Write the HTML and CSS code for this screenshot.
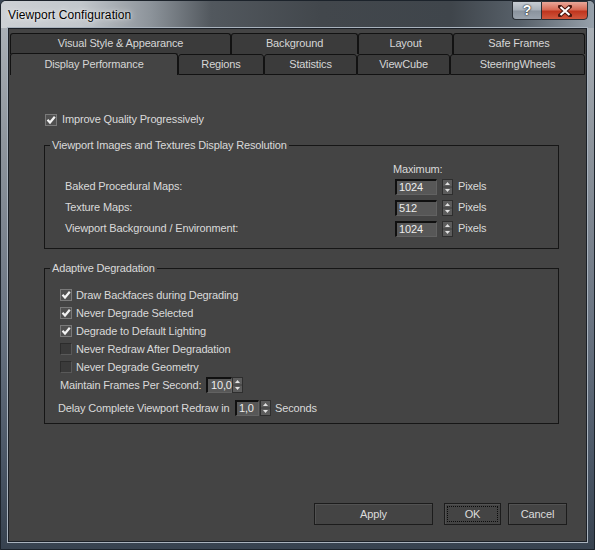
FILE: index.html
```html
<!DOCTYPE html>
<html>
<head>
<meta charset="utf-8">
<link rel="stylesheet" href="styles.css">
</head>
<body>
<div class="window">
  <div class="titlebar">
    <span class="title">Viewport Configuration</span>
    <div class="caption-buttons">
      <div class="cap help">?</div>
      <div class="cap close">
        <svg width="14" height="12" viewBox="0 0 14 12"><path d="M2 1.5 L12 10.5 M12 1.5 L2 10.5" stroke="#4a1810" stroke-width="4" stroke-linecap="square" fill="none"/><path d="M2.5 2 L11.5 10 M11.5 2 L2.5 10" stroke="#ffffff" stroke-width="2" fill="none"/></svg>
      </div>
    </div>
  </div>
  <div class="client">
    <div class="tabs">
      <div class="tabrow row1">
        <div class="tab t-visual">Visual Style &amp; Appearance</div>
        <div class="tab t-background">Background</div>
        <div class="tab t-layout">Layout</div>
        <div class="tab t-safe">Safe Frames</div>
      </div>
      <div class="tabrow row2">
        <div class="tab selected t-display">Display Performance</div>
        <div class="tab t-regions">Regions</div>
        <div class="tab t-stats">Statistics</div>
        <div class="tab t-cube">ViewCube</div>
        <div class="tab t-wheels">SteeringWheels</div>
      </div>
    </div>
    <div class="panel">
      <div class="check improve">
        <span class="box checked"><svg width="12" height="12" viewBox="0 0 12 12"><path d="M2.5 5.8 L5 8.5 L9.8 2.8" stroke="#f2f2f2" stroke-width="2.2" fill="none"/></svg></span>
        <span>Improve Quality Progressively</span>
      </div>

      <fieldset class="group g1">
        <legend>Viewport Images and Textures Display Resolution</legend>
        <div class="g1-body">
          <div class="max-label">Maximum:</div>
          <div class="res-row">
            <span class="res-label">Baked Procedural Maps:</span>
            <span class="field wide">1024</span>
            <span class="spin"><svg width="11" height="16" viewBox="0 0 11 16"><rect x="0.5" y="0.5" width="10" height="15" fill="#5c5c5c" stroke="#2e2e2e"/><line x1="1" y1="8" x2="10" y2="8" stroke="#3c3c3c"/><path d="M5.5 3 L8 6 L3 6 Z" fill="#e2e2e2"/><path d="M3 10 L8 10 L5.5 13 Z" fill="#e2e2e2"/></svg></span>
            <span class="unit">Pixels</span>
          </div>
          <div class="res-row">
            <span class="res-label">Texture Maps:</span>
            <span class="field wide">512</span>
            <span class="spin"><svg width="11" height="16" viewBox="0 0 11 16"><rect x="0.5" y="0.5" width="10" height="15" fill="#5c5c5c" stroke="#2e2e2e"/><line x1="1" y1="8" x2="10" y2="8" stroke="#3c3c3c"/><path d="M5.5 3 L8 6 L3 6 Z" fill="#e2e2e2"/><path d="M3 10 L8 10 L5.5 13 Z" fill="#e2e2e2"/></svg></span>
            <span class="unit">Pixels</span>
          </div>
          <div class="res-row">
            <span class="res-label">Viewport Background / Environment:</span>
            <span class="field wide">1024</span>
            <span class="spin"><svg width="11" height="16" viewBox="0 0 11 16"><rect x="0.5" y="0.5" width="10" height="15" fill="#5c5c5c" stroke="#2e2e2e"/><line x1="1" y1="8" x2="10" y2="8" stroke="#3c3c3c"/><path d="M5.5 3 L8 6 L3 6 Z" fill="#e2e2e2"/><path d="M3 10 L8 10 L5.5 13 Z" fill="#e2e2e2"/></svg></span>
            <span class="unit">Pixels</span>
          </div>
        </div>
      </fieldset>

      <fieldset class="group g2">
        <legend>Adaptive Degradation</legend>
        <div class="g2-body">
          <div class="check row">
            <span class="box checked"><svg width="12" height="12" viewBox="0 0 12 12"><path d="M2.5 5.8 L5 8.5 L9.8 2.8" stroke="#f2f2f2" stroke-width="2.2" fill="none"/></svg></span>
            <span>Draw Backfaces during Degrading</span>
          </div>
          <div class="check row">
            <span class="box checked"><svg width="12" height="12" viewBox="0 0 12 12"><path d="M2.5 5.8 L5 8.5 L9.8 2.8" stroke="#f2f2f2" stroke-width="2.2" fill="none"/></svg></span>
            <span>Never Degrade Selected</span>
          </div>
          <div class="check row">
            <span class="box checked"><svg width="12" height="12" viewBox="0 0 12 12"><path d="M2.5 5.8 L5 8.5 L9.8 2.8" stroke="#f2f2f2" stroke-width="2.2" fill="none"/></svg></span>
            <span>Degrade to Default Lighting</span>
          </div>
          <div class="check row">
            <span class="box"></span>
            <span>Never Redraw After Degradation</span>
          </div>
          <div class="check row">
            <span class="box"></span>
            <span>Never Degrade Geometry</span>
          </div>
          <div class="spin-row fps">
            <span class="fps-label">Maintain Frames Per Second:</span>
            <span class="field fps-field">10,0</span>
            <span class="spin tight"><svg width="11" height="16" viewBox="0 0 11 16"><rect x="0.5" y="0.5" width="10" height="15" fill="#5c5c5c" stroke="#2e2e2e"/><line x1="1" y1="8" x2="10" y2="8" stroke="#3c3c3c"/><path d="M5.5 3 L8 6 L3 6 Z" fill="#e2e2e2"/><path d="M3 10 L8 10 L5.5 13 Z" fill="#e2e2e2"/></svg></span>
          </div>
          <div class="spin-row delay">
            <span class="delay-label">Delay Complete Viewport Redraw in</span>
            <span class="field delay-field">1,0</span>
            <span class="spin near"><svg width="11" height="16" viewBox="0 0 11 16"><rect x="0.5" y="0.5" width="10" height="15" fill="#5c5c5c" stroke="#2e2e2e"/><line x1="1" y1="8" x2="10" y2="8" stroke="#3c3c3c"/><path d="M5.5 3 L8 6 L3 6 Z" fill="#e2e2e2"/><path d="M3 10 L8 10 L5.5 13 Z" fill="#e2e2e2"/></svg></span>
            <span class="unit seconds">Seconds</span>
          </div>
        </div>
      </fieldset>

      <div class="buttons">
        <div class="btn apply">Apply</div>
        <div class="btn ok"><span class="focus">OK</span></div>
        <div class="btn cancel">Cancel</div>
      </div>
    </div>
  </div>
</div>
</body>
</html>
```

FILE: styles.css
```css
* { box-sizing: border-box; }

html, body {
  margin: 0;
  padding: 0;
  background: #3a4654;
}

body {
  font-family: "Liberation Sans", Arial, sans-serif;
  font-size: 11px;
  line-height: 13px;
  letter-spacing: -0.15px;
  color: #dadada;
  white-space: nowrap;
}

.window {
  width: 595px;
  height: 550px;
  border: 1px solid #1c232b;
  border-radius: 6px 6px 0 0;
  display: flex;
  flex-direction: column;
  background: linear-gradient(to bottom, #b0b6bc 0px, #8e959d 140px, #6a7482 320px, #4a5666 460px, #37424f 550px);
  overflow: hidden;
}

.titlebar {
  height: 27px;
  flex: none;
  display: flex;
  justify-content: space-between;
  align-items: flex-start;
  padding: 0 6px 0 7px;
  background: linear-gradient(to right, #cdd1d5 0px, #c2c7cc 80px, #8c939a 150px, #52585e 210px, #42474c 320px, #3f454b 450px, #58616a 520px, #98a2ac 594px);
}

.title {
  font-family: "Liberation Sans", Arial, sans-serif;
  font-size: 12px;
  line-height: 14px;
  letter-spacing: 0.1px;
  color: #000;
  margin-top: 7px;
  text-shadow: 0 0 6px rgba(255,255,255,0.9), 0 0 2px rgba(255,255,255,0.8);
}

.caption-buttons {
  display: flex;
}

.cap {
  height: 19px;
  border: 1px solid #2b3036;
  display: flex;
  align-items: center;
  justify-content: center;
}

.help {
  width: 29px;
  border-right: none;
  border-radius: 0 0 0 4px;
  background: linear-gradient(to bottom, #c8ced4 0%, #a7afb8 48%, #8a939d 52%, #9aa3ad 100%);
  color: #fff;
  font-weight: bold;
  font-size: 14px;
  text-shadow: 0 0 2px #1a1f24, 0 0 1px #1a1f24;
}

.close {
  width: 47px;
  border-radius: 0 0 4px 0;
  background: linear-gradient(to bottom, #e9a89a 0%, #d76a55 45%, #c0351e 55%, #d0583e 100%);
}

.client {
  flex: 1;
  margin: 0 7px 7px 7px;
  background: #444444;
  border: 1px solid #1b2027;
  box-shadow: 0 0 0 1px #a9b3be;
  display: flex;
  flex-direction: column;
}

/* Tabs */
.tabs {
  padding: 4px 0 0 1px;
  flex: none;
}

.tabrow {
  display: flex;
}

.row1 {
  height: 21px;
}

.row2 {
  height: 22px;
  margin-top: -1px;
  align-items: flex-end;
}

.tab {
  height: 21px;
  background: #3b3b3b;
  border: 1px solid #121212;
  border-radius: 3px 3px 0 0;
  color: #d6d6d6;
  text-align: center;
}

.row1 .tab {
  border-bottom: none;
  line-height: 18px;
}

.row2 .tab {
  line-height: 19px;
}

.row2 .tab.selected {
  height: 22px;
  background: #444444;
  border-bottom: none;
  line-height: 20px;
}

.t-visual { width: 221px; }
.t-background { width: 127px; }
.t-layout { width: 95px; }
.t-safe { width: 132px; }
.t-display { width: 168px; }
.t-regions { width: 86px; }
.t-stats { width: 93px; }
.t-cube { width: 93px; }
.t-wheels { width: 135px; }

/* Panel */
.panel {
  flex: 1;
  display: flex;
  flex-direction: column;
  padding: 0 19px 16px 35px;
}

.check {
  display: flex;
  align-items: center;
}

.box {
  width: 12px;
  height: 12px;
  flex: none;
  background: #3a3a3a;
  border: 1px solid #595959;
  border-top-color: #2c2c2c;
  border-left-color: #2c2c2c;
  display: flex;
  align-items: center;
  justify-content: center;
}

.box svg {
  display: block;
  margin: -1px;
}

.box.checked {
  background: #505050;
  border: 1px solid #7a7a7a;
}

.improve {
  height: 13px;
  margin-top: 38px;
  padding-left: 1px;
}

.improve .box {
  margin-right: 5px;
}

.group {
  margin: 13px 0 0 0;
  padding: 0;
  width: 515px;
  border: 1px solid #161616;
  min-inline-size: 0;
}

.group legend {
  margin-left: 5px;
  padding: 0 2px;
  line-height: 13px;
  color: #dadada;
}

.g1-body {
  padding: 11px 0 9px 20px;
}

.max-label {
  height: 13px;
  padding-left: 328px;
}

.res-row {
  height: 21px;
  display: flex;
  align-items: center;
}

.res-label {
  width: 330px;
  flex: none;
}

.field {
  height: 16px;
  background: #575757;
  border-top: 2px solid #101010;
  border-left: 2px solid #101010;
  border-right: 1px solid #626262;
  border-bottom: 1px solid #626262;
  color: #ececec;
  line-height: 13px;
  padding-left: 2px;
  flex: none;
}

.field.wide { width: 42px; }

.spin {
  display: flex;
  flex: none;
  margin-left: 5px;
}

.spin svg { display: block; }

.spin.tight { margin-left: 0; }
.spin.near { margin-left: 1px; }

.unit {
  margin-left: 5px;
}

.g2-body {
  padding: 11px 0 6px 14px;
}

.check.row {
  height: 18px;
  padding-left: 1px;
}

.check.row .box {
  margin-right: 4px;
}

.spin-row {
  display: flex;
  align-items: center;
  height: 18px;
}

.fps-label {
  width: 147px;
  padding-left: 1px;
  flex: none;
}

.fps-field {
  width: 26px;
  padding-left: 3px;
}

.delay {
  margin-top: 5px;
}

.delay-label {
  width: 177px;
  margin-left: -1px;
  flex: none;
}

.delay-field {
  width: 24px;
  padding-left: 2px;
}

.seconds {
  margin-left: 4px;
}

/* Buttons */
.buttons {
  margin-top: auto;
  display: flex;
  justify-content: flex-end;
}

.btn {
  height: 22px;
  background: #444444;
  border: 1px solid #1c1c1c;
  box-shadow: inset 1px 1px 0 #525252;
  color: #dcdcdc;
  display: flex;
  align-items: center;
  justify-content: center;
}

.apply { width: 119px; }
.ok { width: 57px; margin-left: 11px; padding: 2px; }
.cancel { width: 59px; margin-left: 7px; }

.ok .focus {
  flex: 1;
  align-self: stretch;
  border: 1px dotted #0c0c0c;
  display: flex;
  align-items: center;
  justify-content: center;
}
```
